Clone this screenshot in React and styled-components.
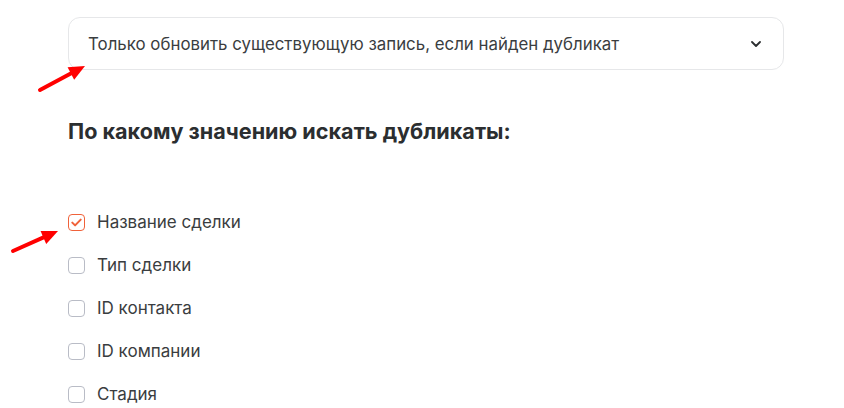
import styled, { createGlobalStyle } from "styled-components";

const GlobalStyle = createGlobalStyle`
  body {
    margin: 0;
    background: #ffffff;
    font-family: Inter, "Noto Sans", sans-serif;
    color: #333638;
  }
`;

const options = [
  { label: "Название сделки", checked: true },
  { label: "Тип сделки", checked: false },
  { label: "ID контакта", checked: false },
  { label: "ID компании", checked: false },
  { label: "Стадия", checked: false },
];

function Arrow({ x1, y1, x2, y2 }) {
  const dx = x2 - x1;
  const dy = y2 - y1;
  const len = Math.hypot(dx, dy);
  const ux = dx / len;
  const uy = dy / len;
  const head = 16;
  const bx = x2 - ux * head;
  const by = y2 - uy * head;
  const px = -uy * 7;
  const py = ux * 7;
  return (
    <>
      <line
        x1={x1}
        y1={y1}
        x2={bx + ux * 2}
        y2={by + uy * 2}
        stroke="#ff0000"
        strokeWidth="4"
        strokeLinecap="round"
      />
      <polygon
        points={`${x2},${y2} ${bx + px},${by + py} ${bx - px},${by - py}`}
        fill="#ff0000"
      />
    </>
  );
}

export default function App() {
  return (
    <Page>
      <GlobalStyle />
      <Select>
        <span>Только обновить существующую запись, если найден дубликат</span>
        <svg width="10" height="6" viewBox="0 0 10 6">
          <path
            d="M1 1l4 4 4-4"
            stroke="#2b2e30"
            strokeWidth="1.8"
            fill="none"
            strokeLinecap="round"
            strokeLinejoin="round"
          />
        </svg>
      </Select>

      <Heading>По какому значению искать дубликаты:</Heading>

      <List>
        {options.map((o) => (
          <Row key={o.label}>
            <Box $checked={o.checked}>
              {o.checked && (
                <svg width="11" height="9" viewBox="0 0 11 9">
                  <path
                    d="M1.3 4.6l2.8 2.8L9.7 1.6"
                    stroke="#f0623a"
                    strokeWidth="2"
                    fill="none"
                    strokeLinecap="round"
                    strokeLinejoin="round"
                  />
                </svg>
              )}
            </Box>
            <Label>{o.label}</Label>
          </Row>
        ))}
      </List>

      <Annotations width="844" height="408">
        <Arrow x1={40} y1={90} x2={85} y2={66} />
        <Arrow x1={13} y1={251} x2={58} y2={231} />
      </Annotations>
    </Page>
  );
}

const Page = styled.div`
  position: relative;
  width: 844px;
  height: 408px;
  overflow: hidden;
  box-sizing: border-box;
  padding: 17px 60px 0 68px;
`;

const Select = styled.div`
  display: flex;
  align-items: center;
  justify-content: space-between;
  width: 716px;
  height: 53px;
  box-sizing: border-box;
  padding: 0 22px 0 19px;
  border: 1px solid #e6e7e9;
  border-radius: 12px;
  font-size: 16.85px;
  color: #3a3d40;
`;

const Heading = styled.h2`
  margin: 46px 0 0;
  font-size: 21.6px;
  font-weight: 700;
  line-height: 30px;
  color: #2b2e30;
`;

const List = styled.div`
  display: flex;
  flex-direction: column;
  gap: 23px;
  margin-top: 66px;
`;

const Row = styled.label`
  display: flex;
  align-items: center;
  gap: 12px;
  height: 20px;
`;

const Box = styled.span`
  display: flex;
  align-items: center;
  justify-content: center;
  width: 17px;
  height: 17px;
  box-sizing: border-box;
  border: 1px solid ${(p) => (p.$checked ? "#f0623a" : "#b9bcc6")};
  border-radius: 4px;
  background: #fff;
`;

const Label = styled.span`
  font-size: 17px;
  color: #3a3d40;
`;

const Annotations = styled.svg`
  position: absolute;
  left: 0;
  top: 0;
  pointer-events: none;
`;
